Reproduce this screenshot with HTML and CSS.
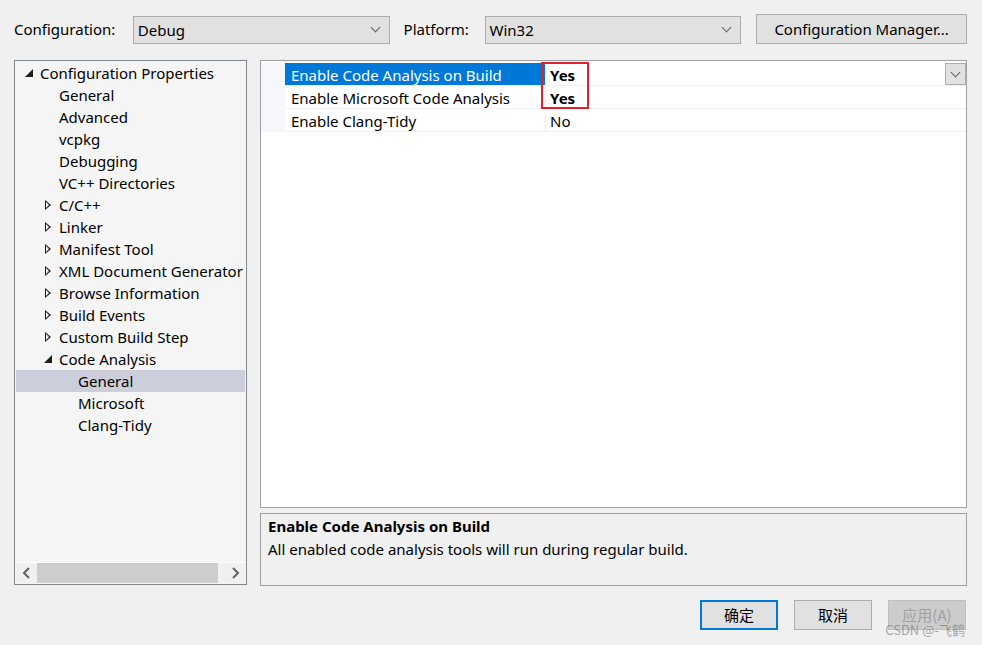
FILE: index.html
```html
<!DOCTYPE html>
<html lang="en">
<head>
    <meta charset="UTF-8">
    <title>Code Analysis Property Pages</title>
    <link rel="stylesheet" href="styles.css">
</head>
<body>
    <div class="dialog">
        <div class="toolbar">
            <span class="label">Configuration:</span>
            <div class="combo combo-config"><span>Debug</span><span class="chev"></span></div>
            <span class="label label-platform">Platform:</span>
            <div class="combo combo-platform"><span>Win32</span><span class="chev"></span></div>
            <button class="btn btn-manager">Configuration Manager...</button>
        </div>

        <div class="content">
            <div class="tree">
                <ul class="tree-list">
                    <li class="node lvl0"><span class="tw open"></span>Configuration Properties</li>
                    <li class="node lvl1"><span class="tw"></span>General</li>
                    <li class="node lvl1"><span class="tw"></span>Advanced</li>
                    <li class="node lvl1"><span class="tw"></span>vcpkg</li>
                    <li class="node lvl1"><span class="tw"></span>Debugging</li>
                    <li class="node lvl1"><span class="tw"></span>VC++ Directories</li>
                    <li class="node lvl1"><span class="tw closed"></span>C/C++</li>
                    <li class="node lvl1"><span class="tw closed"></span>Linker</li>
                    <li class="node lvl1"><span class="tw closed"></span>Manifest Tool</li>
                    <li class="node lvl1"><span class="tw closed"></span>XML Document Generator Tool</li>
                    <li class="node lvl1"><span class="tw closed"></span>Browse Information</li>
                    <li class="node lvl1"><span class="tw closed"></span>Build Events</li>
                    <li class="node lvl1"><span class="tw closed"></span>Custom Build Step</li>
                    <li class="node lvl1"><span class="tw open"></span>Code Analysis</li>
                    <li class="node lvl2 selected"><span class="tw"></span>General</li>
                    <li class="node lvl2"><span class="tw"></span>Microsoft</li>
                    <li class="node lvl2"><span class="tw"></span>Clang-Tidy</li>
                </ul>
                <div class="hscroll">
                    <span class="arrow">
                        <svg width="10" height="12" viewBox="0 0 10 12"><path d="M7 1 L2 6 L7 11" fill="none" stroke="#606060" stroke-width="2"/></svg>
                    </span>
                    <div class="track"><div class="thumb"></div></div>
                    <span class="arrow">
                        <svg width="10" height="12" viewBox="0 0 10 12"><path d="M3 1 L8 6 L3 11" fill="none" stroke="#606060" stroke-width="2"/></svg>
                    </span>
                </div>
            </div>

            <div class="right">
                <div class="grid">
                    <div class="row">
                        <div class="gutter"></div>
                        <div class="name active">Enable Code Analysis on Build</div>
                        <div class="value bold">Yes<span class="drop"><span class="chev"></span></span></div>
                    </div>
                    <div class="row">
                        <div class="gutter"></div>
                        <div class="name">Enable Microsoft Code Analysis</div>
                        <div class="value bold">Yes</div>
                    </div>
                    <div class="row">
                        <div class="gutter"></div>
                        <div class="name">Enable Clang-Tidy</div>
                        <div class="value">No</div>
                    </div>
                    <div class="mark"></div>
                </div>
                <div class="desc">
                    <div class="desc-title">Enable Code Analysis on Build</div>
                    <div class="desc-text">All enabled code analysis tools will run during regular build.</div>
                </div>
            </div>
        </div>

        <div class="footer">
            <button class="btn btn-ok">确定</button>
            <button class="btn">取消</button>
            <button class="btn btn-disabled">应用(A)</button>
            <span class="watermark">CSDN @-飞鹤</span>
        </div>
    </div>
</body>
</html>
```

FILE: styles.css
```css
body {
    margin: 0;
    padding: 0;
    background-color: #f0f0f0;
    font-family: 'Noto Sans', 'Noto Sans CJK SC', sans-serif;
    font-size: 15px;
    color: #000;
    width: 982px;
    height: 645px;
    overflow: hidden;
}

.dialog {
    padding: 14px 15px 0 14px;
}

.toolbar {
    display: flex;
    align-items: center;
    height: 30px;
}

.label {
    width: 119px;
    line-height: 32px;
}

.label-platform {
    width: 81px;
    margin-left: 14px;
}

.combo {
    box-sizing: border-box;
    height: 28px;
    border: 1px solid #adadad;
    background: #e1e1e1;
    display: flex;
    align-items: center;
    justify-content: space-between;
    padding: 0 10px 0 4px;
    margin-top: 1px;
}

.combo-config {
    width: 257px;
}

.combo-platform {
    width: 257px;
}

.chev {
    width: 6px;
    height: 6px;
    border-right: 1px solid #606060;
    border-bottom: 1px solid #606060;
    transform: rotate(45deg);
    margin-top: -4px;
}

.btn {
    box-sizing: border-box;
    font-family: inherit;
    font-size: 15px;
    height: 30px;
    background: #e1e1e1;
    border: 1px solid #adadad;
    padding: 0;
    color: #000;
}

.btn-manager {
    margin-left: 15px;
    width: 211px;
}

.content {
    display: flex;
    margin-top: 16px;
}

.tree {
    box-sizing: border-box;
    width: 233px;
    height: 525px;
    border: 1px solid #828790;
    background: #f5f5f5;
    display: flex;
    flex-direction: column;
    padding: 1px;
}

.tree-list {
    list-style: none;
    margin: 0;
    padding: 0;
    flex: 1;
    overflow: hidden;
}

.node {
    height: 22px;
    line-height: 22px;
    white-space: nowrap;
    display: flex;
    align-items: center;
}

.lvl0 { padding-left: 6px; }
.lvl1 { padding-left: 25px; }
.lvl2 { padding-left: 44px; }

.selected {
    background: #cccedb;
}

.tw {
    width: 18px;
    height: 22px;
    flex-shrink: 0;
    position: relative;
}

.tw.open::before {
    content: "";
    position: absolute;
    left: 3px;
    top: 7px;
    border-left: 8px solid transparent;
    border-bottom: 8px solid #1e1e1e;
}

.tw.closed::before {
    content: "";
    position: absolute;
    left: 4px;
    top: 6px;
    border-top: 5px solid transparent;
    border-bottom: 5px solid transparent;
    border-left: 6px solid #1e1e1e;
}

.tw.closed::after {
    content: "";
    position: absolute;
    left: 5px;
    top: 8px;
    border-top: 3px solid transparent;
    border-bottom: 3px solid transparent;
    border-left: 3.5px solid #f5f5f5;
}

.hscroll {
    height: 20px;
    display: flex;
    align-items: center;
    border-top: 1px solid #fff;
    background: #f0f0f0;
}

.arrow {
    width: 21px;
    display: flex;
    justify-content: center;
}

.track {
    flex: 1;
    height: 20px;
}

.thumb {
    width: 181px;
    height: 20px;
    background: #cdcdcd;
}

.right {
    flex: 1;
    margin-left: 13px;
    display: flex;
    flex-direction: column;
}

.grid {
    box-sizing: border-box;
    height: 448px;
    border: 1px solid #a0a0a0;
    background: #fff;
    padding-top: 2px;
    position: relative;
}

.row {
    display: flex;
    height: 23px;
    line-height: 24px;
}

.gutter {
    width: 24px;
    background: #f5f7fb;
}

.name {
    width: 254px;
    padding-left: 6px;
    border-bottom: 1px solid #f0f0f5;
    border-right: 1px solid #f0f0f5;
    white-space: nowrap;
}

.name.active {
    background: #0078d7;
    color: #fff;
}

.value {
    flex: 1;
    padding-left: 4px;
    border-bottom: 1px solid #f0f0f5;
    position: relative;
}

.bold {
    font-weight: bold;
}

.drop {
    position: absolute;
    right: 0;
    top: 0;
    box-sizing: border-box;
    width: 21px;
    height: 22px;
    border: 1px solid #adadad;
    background: #e1e1e1;
    display: flex;
    align-items: center;
    justify-content: center;
}

.mark {
    position: absolute;
    left: 280px;
    top: 1px;
    width: 44px;
    height: 43px;
    border: 2px solid #e0202a;
}

.desc {
    box-sizing: border-box;
    margin-top: 5px;
    height: 73px;
    border: 1px solid #a0a0a0;
    padding: 1px 7px;
}

.desc-title {
    font-weight: bold;
    line-height: 22px;
}

.desc-text {
    line-height: 24px;
}

.footer {
    display: flex;
    justify-content: flex-end;
    gap: 16px;
    margin-top: 14px;
    padding-right: 1px;
    position: relative;
}

.footer .btn {
    width: 78px;
    height: 30px;
    font-family: 'Noto Sans CJK SC', sans-serif;
    font-size: 15px;
    line-height: 26px;
}

.btn-ok {
    border: 2px solid #0078d7;
}

.btn-disabled {
    background: #cccccc;
    border-color: #bfbfbf;
    color: #a0a0a0;
}

.watermark {
    position: absolute;
    right: 2px;
    top: 20px;
    font-family: 'Noto Sans CJK SC', sans-serif;
    font-size: 13px;
    color: rgba(110, 110, 110, 0.6);
}
```
